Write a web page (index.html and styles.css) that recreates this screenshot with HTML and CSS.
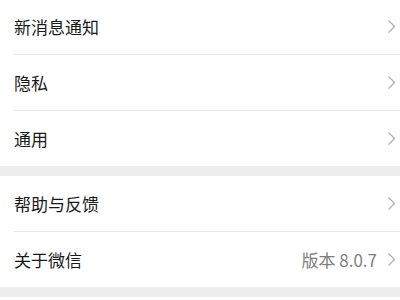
FILE: index.html
```html
<!DOCTYPE html>
<html lang="zh-CN">
<head>
<meta charset="utf-8">
<link rel="stylesheet" href="styles.css">
</head>
<body>
<div class="page">
  <div class="group first">
    <div class="row"><span class="label">新消息通知</span><span class="right"><svg class="chev" width="9" height="15" viewBox="0 0 9 15"><path d="M1.5 1.5 L7.5 7.5 L1.5 13.5" fill="none" stroke="#b4b4b4" stroke-width="1.4"/></svg></span></div>
    <div class="sep"></div>
    <div class="row"><span class="label">隐私</span><span class="right"><svg class="chev" width="9" height="15" viewBox="0 0 9 15"><path d="M1.5 1.5 L7.5 7.5 L1.5 13.5" fill="none" stroke="#b4b4b4" stroke-width="1.4"/></svg></span></div>
    <div class="sep"></div>
    <div class="row"><span class="label">通用</span><span class="right"><svg class="chev" width="9" height="15" viewBox="0 0 9 15"><path d="M1.5 1.5 L7.5 7.5 L1.5 13.5" fill="none" stroke="#b4b4b4" stroke-width="1.4"/></svg></span></div>
  </div>
  <div class="band"></div>
  <div class="group">
    <div class="row"><span class="label">帮助与反馈</span><span class="right"><svg class="chev" width="9" height="15" viewBox="0 0 9 15"><path d="M1.5 1.5 L7.5 7.5 L1.5 13.5" fill="none" stroke="#b4b4b4" stroke-width="1.4"/></svg></span></div>
    <div class="sep"></div>
    <div class="row"><span class="label">关于微信</span><span class="right"><span class="value">版本 8.0.7</span><svg class="chev" width="9" height="15" viewBox="0 0 9 15"><path d="M1.5 1.5 L7.5 7.5 L1.5 13.5" fill="none" stroke="#b4b4b4" stroke-width="1.4"/></svg></span></div>
  </div>
  <div class="band"></div>
</div>
</body>
</html>
```
FILE: styles.css
```css
html, body {
  margin: 0;
  padding: 0;
  background: #ffffff;
}
body {
  font-family: "Noto Sans CJK SC", "Noto Sans", sans-serif;
  color: #191919;
}
.page {
  display: flex;
  flex-direction: column;
  width: 400px;
  height: 300px;
  overflow: hidden;
}
.group {
  display: flex;
  flex-direction: column;
  background: #ffffff;
}
.group.first {
  margin-top: -1px;
}
.row {
  height: 55px;
  display: flex;
  align-items: center;
  justify-content: space-between;
  padding: 0 4px 0 14px;
  font-size: 17px;
  flex-shrink: 0;
}
.label {
  line-height: 1;
}
.right {
  display: flex;
  align-items: center;
  gap: 10px;
}
.value {
  color: #7f7f7f;
  line-height: 1;
}
.chev {
  display: block;
}
.sep {
  height: 1px;
  margin-left: 14px;
  background: #e6e6e6;
  flex-shrink: 0;
}
.band {
  height: 10px;
  background: #ededed;
  flex-shrink: 0;
}
```
